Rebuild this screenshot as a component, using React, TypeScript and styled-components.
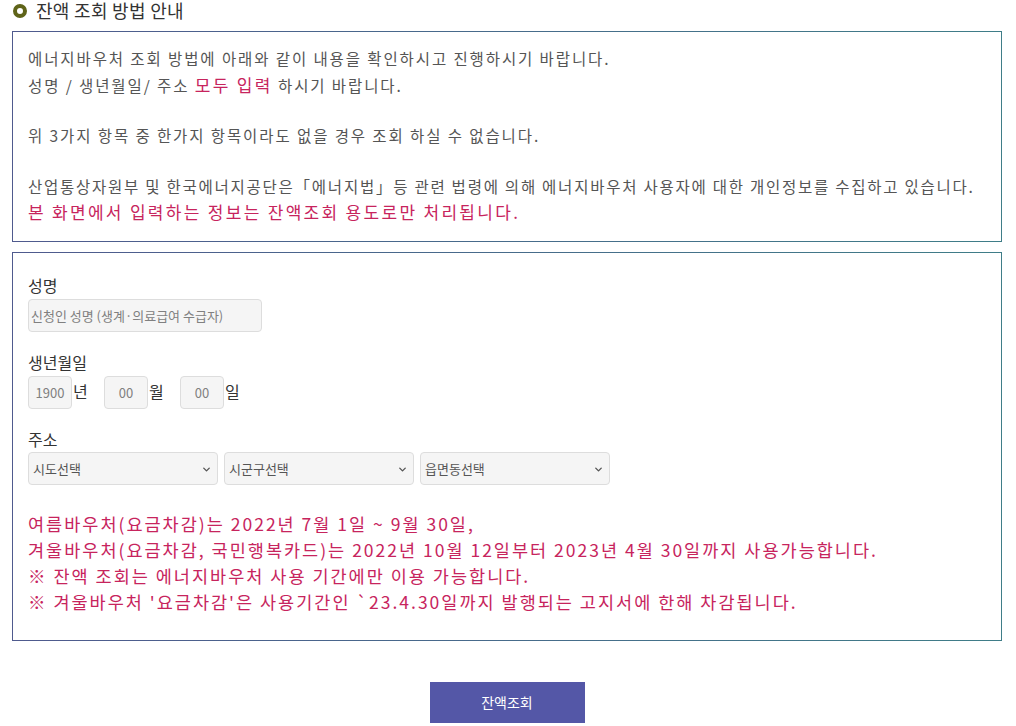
import styled, { createGlobalStyle } from "styled-components";
import { ChevronDown } from "lucide-react";

const GlobalStyle = createGlobalStyle`
  body {
    margin: 0;
    background: #fff;
    font-family: "Noto Sans CJK KR", "Noto Sans", sans-serif;
    color: #555;
  }
`;

const Page = styled.div`
  padding: 0 14px 0 12px;
`;

const Title = styled.h2`
  display: flex;
  align-items: center;
  gap: 9px;
  margin: 0;
  height: 21px;
  line-height: 21px;
  font-size: 18px;
  letter-spacing: 0.3px;
  font-weight: 400;
  color: #333;
`;

const Ring = styled.span`
  width: 6px;
  height: 6px;
  border-radius: 50%;
  border: 4px solid #5f6419;
  margin-left: 1px;
`;

const Box = styled.section<{ $pad: string; $mt: number }>`
  margin-top: ${(p) => p.$mt}px;
  border: 1px solid;
  border-image: linear-gradient(to right, #4f5a8e, #3f7d88) 1;
  padding: ${(p) => p.$pad};
`;

const Para = styled.p<{ $ls?: number }>`
  margin: 0;
  font-size: 15.5px;
  letter-spacing: ${(p) => p.$ls ?? 1.9}px;
  line-height: 25.5px;
  color: #555;
`;

const Gap = styled.div`
  height: 25px;
`;

const Em = styled.span`
  color: #c7245d;
  font-size: 17px;
  letter-spacing: 2.3px;
`;

const Label = styled.div<{ $mt?: number }>`
  margin-top: ${(p) => p.$mt ?? 0}px;
  font-size: 16px;
  color: #333;
  line-height: 20px;
`;

const TextInput = styled.input<{ $w: number; $center?: boolean }>`
  box-sizing: border-box;
  width: ${(p) => p.$w}px;
  height: 33px;
  margin-top: 4px;
  border: 1px solid #ddd;
  border-radius: 4px;
  background: #f5f5f5;
  padding: 0 ${(p) => (p.$center ? 0 : 2)}px;
  text-align: ${(p) => (p.$center ? "center" : "left")};
  font-family: inherit;
  font-size: 13px;
  color: #555;
  &::placeholder {
    color: #808080;
  }
`;

const DateRow = styled.div`
  display: flex;
  align-items: center;
`;

const Unit = styled.span<{ $w: number }>`
  display: inline-block;
  width: ${(p) => p.$w}px;
  padding-left: 1px;
  font-size: 16px;
  color: #333;
  margin-top: 2px;
`;

const SelectRow = styled.div`
  display: flex;
  gap: 6px;
  margin-top: 3px;
`;

const SelectWrap = styled.div`
  position: relative;
  width: 190px;
`;

const Select = styled.select`
  box-sizing: border-box;
  width: 100%;
  height: 33px;
  appearance: none;
  border: 1px solid #ddd;
  border-radius: 4px;
  background: #f5f5f5;
  padding: 0 4px;
  font-family: inherit;
  font-size: 13px;
  color: #555;
`;

const Caret = styled(ChevronDown)`
  position: absolute;
  right: 6px;
  top: 12px;
  pointer-events: none;
`;

const Notice = styled.div`
  margin-top: 26px;
  font-size: 17.5px;
  line-height: 26.3px;
  letter-spacing: 2px;
  color: #c7245d;
`;

const ButtonRow = styled.div`
  display: flex;
  justify-content: center;
  padding-top: 41px;
`;

const Button = styled.button`
  width: 155px;
  height: 41px;
  border: none;
  background: #5457a7;
  color: #fff;
  font-family: inherit;
  font-size: 14px;
`;

const regions = ["시도선택", "시군구선택", "읍면동선택"];

export default function App() {
  return (
    <Page>
      <GlobalStyle />
      <Title>
        <Ring />
        잔액 조회 방법 안내
      </Title>
      <Box $pad="14px 15px 15px" $mt={10}>
        <Para>에너지바우처 조회 방법에 아래와 같이 내용을 확인하시고 진행하시기 바랍니다.</Para>
        <Para>
          성명 / 생년월일/ 주소 <Em>모두 입력</Em> 하시기 바랍니다.
        </Para>
        <Gap />
        <Para>위 3가지 항목 중 한가지 항목이라도 없을 경우 조회 하실 수 없습니다.</Para>
        <Gap />
        <Para $ls={1.75}>
          산업통상자원부 및 한국에너지공단은「에너지법」등 관련 법령에 의해 에너지바우처 사용자에 대한 개인정보를 수집하고 있습니다.
        </Para>
        <Para>
          <Em>본 화면에서 입력하는 정보는 잔액조회 용도로만 처리됩니다.</Em>
        </Para>
      </Box>
      <Box $pad="22px 15px 24px" $mt={10}>
        <Label>성명</Label>
        <TextInput $w={234} placeholder="신청인 성명 (생계·의료급여 수급자)" />
        <Label $mt={20}>생년월일</Label>
        <DateRow>
          <TextInput $w={44} $center placeholder="1900" />
          <Unit $w={31}>년</Unit>
          <TextInput $w={44} $center placeholder="00" />
          <Unit $w={31}>월</Unit>
          <TextInput $w={44} $center placeholder="00" />
          <Unit $w={20}>일</Unit>
        </DateRow>
        <Label $mt={20}>주소</Label>
        <SelectRow>
          {regions.map((r) => (
            <SelectWrap key={r}>
              <Select defaultValue={r}>
                <option>{r}</option>
              </Select>
              <Caret size={11} strokeWidth={3} color="#555" />
            </SelectWrap>
          ))}
        </SelectRow>
        <Notice>
          여름바우처(요금차감)는 2022년 7월 1일 ~ 9월 30일,
          <br />
          겨울바우처(요금차감, 국민행복카드)는 2022년 10월 12일부터 2023년 4월 30일까지 사용가능합니다.
          <br />※ 잔액 조회는 에너지바우처 사용 기간에만 이용 가능합니다.
          <br />※ 겨울바우처 '요금차감'은 사용기간인 `23.4.30일까지 발행되는 고지서에 한해 차감됩니다.
        </Notice>
      </Box>
      <ButtonRow>
        <Button>잔액조회</Button>
      </ButtonRow>
    </Page>
  );
}
